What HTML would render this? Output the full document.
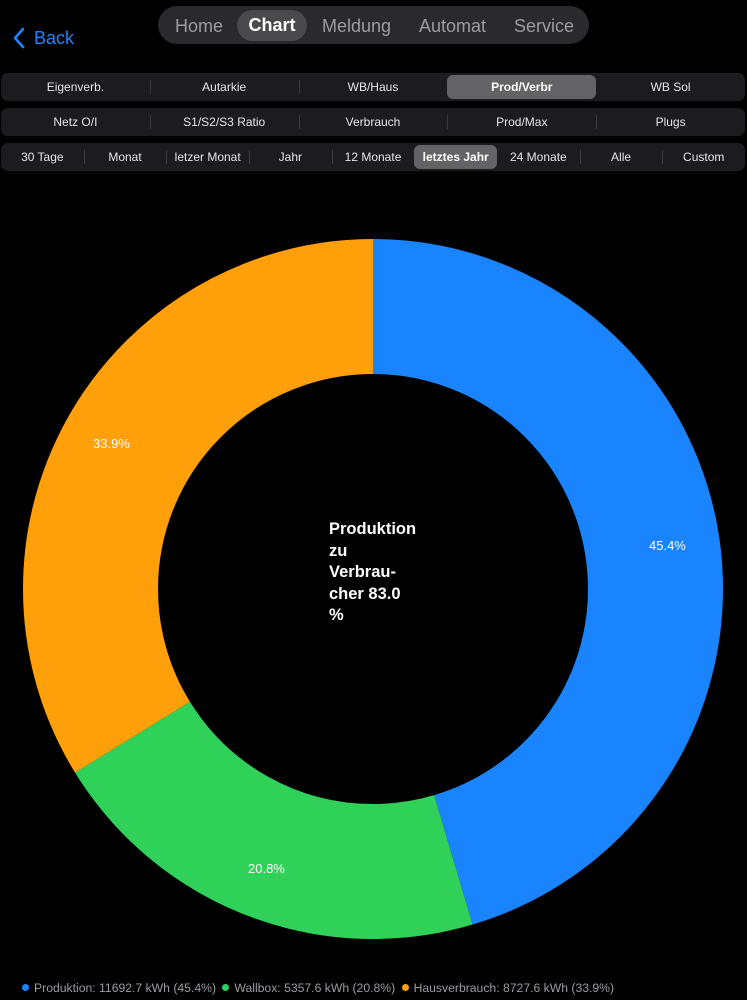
<!DOCTYPE html>
<html><head><meta charset="utf-8"><style>
*{margin:0;padding:0;box-sizing:border-box}
body{width:747px;height:1000px;background:#000;font-family:"Liberation Sans",sans-serif;color:#fff;position:relative;overflow:hidden}
.back{position:absolute;left:12px;top:27px;color:#1f84ff;font-size:18px;display:flex;align-items:center}
.nav{position:absolute;left:158px;top:6px;width:431px;height:38px;background:#2a2a2c;border-radius:19px}
.nav span{position:absolute;top:1px;line-height:38px;font-size:18px;color:#9c9ca1}
.nav .sel{background:#4a4a4d;color:#fff;font-weight:bold;border-radius:16px;top:4px;height:31px;line-height:31px;text-align:center}
.seg{position:absolute;left:1px;width:744px;height:28px;background:#1c1c1e;border-radius:7px;display:flex;font-size:12px;color:#e5e5ea}
.seg div{flex:1;text-align:center;line-height:29px;position:relative}
.seg div+div:before{content:"";position:absolute;left:0;top:7px;height:14px;border-left:1px solid #3a3a3c}
.seg .s{background:#636366;border-radius:6px;margin:2px 0;line-height:25px;font-weight:bold;color:#fff}
.seg .s:before,.seg .s+div:before{display:none}
.lbl{position:absolute;font-size:13px;color:#fff}
.legend{position:absolute;top:981px;left:22px;font-size:12.2px;color:#9c9ca1;white-space:nowrap}
.dot{display:inline-block;width:7px;height:7px;border-radius:50%;margin-right:5px;vertical-align:1px}
</style></head><body>
<div class="back"><svg width="14" height="22" viewBox="0 0 14 22"><path d="M11 2 L3 11 L11 20" stroke="#1f84ff" stroke-width="2.6" fill="none" stroke-linecap="round" stroke-linejoin="round"/></svg><span style="margin-left:8px">Back</span></div>
<div class="nav">
<span style="left:17px">Home</span>
<span class="sel" style="left:79px;width:70px">Chart</span>
<span style="left:164px">Meldung</span>
<span style="left:261px">Automat</span>
<span style="left:356px">Service</span>
</div>
<div class="seg" style="top:73px"><div>Eigenverb.</div><div>Autarkie</div><div>WB/Haus</div><div class="s">Prod/Verbr</div><div>WB Sol</div></div>
<div class="seg" style="top:108px"><div>Netz O/I</div><div>S1/S2/S3 Ratio</div><div>Verbrauch</div><div>Prod/Max</div><div>Plugs</div></div>
<div class="seg" style="top:143px"><div>30 Tage</div><div>Monat</div><div>letzer Monat</div><div>Jahr</div><div>12 Monate</div><div class="s">letztes Jahr</div><div>24 Monate</div><div>Alle</div><div>Custom</div></div>
<svg style="position:absolute;left:0;top:0" width="747" height="1000">
<g transform="rotate(-90 373 589)" fill="none" stroke-width="135">
<circle cx="373" cy="589" r="282.5" stroke="#1a84ff" stroke-dasharray="805.9 2000"/>
<circle cx="373" cy="589" r="282.5" stroke="#30d158" stroke-dasharray="0 805.9 369.2 2000"/>
<circle cx="373" cy="589" r="282.5" stroke="#ff9f0a" stroke-dasharray="0 1175.1 601.5 2000"/>
</g>
</svg>
<div class="lbl" style="left:649px;top:538px">45.4%</div>
<div class="lbl" style="left:248px;top:861px">20.8%</div>
<div class="lbl" style="left:93px;top:436px">33.9%</div>
<div style="position:absolute;left:329px;top:519px;font-size:16.5px;font-weight:bold;line-height:21.5px;color:#fff">Produktion<br>zu<br>Verbrau-<br>cher 83.0<br>%</div>
<div class="legend"><span class="dot" style="background:#1a84ff"></span>Produktion: 11692.7 kWh (45.4%) <span class="dot" style="background:#30d158;margin-left:3px"></span>Wallbox: 5357.6 kWh (20.8%) <span class="dot" style="background:#ff9f0a;margin-left:3px"></span>Hausverbrauch: 8727.6 kWh (33.9%)</div>
</body></html>
